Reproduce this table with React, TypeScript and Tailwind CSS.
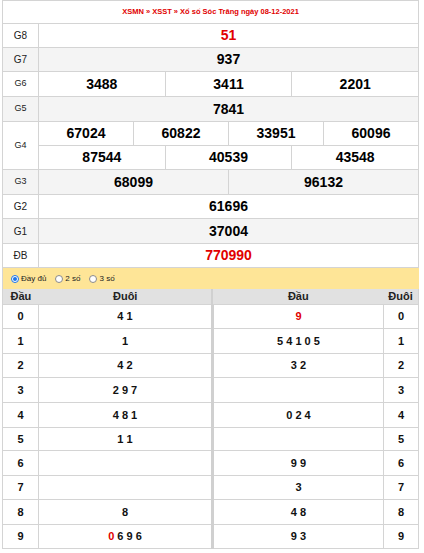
const font = { fontFamily: '"Liberation Sans", Arial, sans-serif' };

type Prize = { label: string; nums: string[][]; h: string; gray?: boolean; red?: boolean; small?: boolean };

const prizes: Prize[] = [
  { label: "G8", nums: [["51"]], h: "h-[24px]", red: true },
  { label: "G7", nums: [["937"]], h: "h-[24px]", gray: true },
  { label: "G6", nums: [["3488", "3411", "2201"]], h: "h-[25px]", small: true },
  { label: "G5", nums: [["7841"]], h: "h-[25px]", gray: true, small: true },
  {
    label: "G4",
    nums: [
      ["67024", "60822", "33951", "60096"],
      ["87544", "40539", "43548"],
    ],
    h: "h-[24px]",
    small: true,
  },
  { label: "G3", nums: [["68099", "96132"]], h: "h-[25px]", gray: true, small: true },
  { label: "G2", nums: [["61696"]], h: "h-[24px]" },
  { label: "G1", nums: [["37004"]], h: "h-[25px]", gray: true },
  { label: "ĐB", nums: [["770990"]], h: "h-[24px]", red: true },
];

const loto = [
  { d: "0", l: "4 1", r: "9", rRed: true, h: "h-[24px]" },
  { d: "1", l: "1", r: "5 4 1 0 5", h: "h-[25px]" },
  { d: "2", l: "4 2", r: "3 2", h: "h-[24px]" },
  { d: "3", l: "2 9 7", r: "", h: "h-[25px]" },
  { d: "4", l: "4 8 1", r: "0 2 4", h: "h-[25px]" },
  { d: "5", l: "1 1", r: "", h: "h-[23px]" },
  { d: "6", l: "", r: "9 9", h: "h-[25px]" },
  { d: "7", l: "", r: "3", h: "h-[24px]" },
  { d: "8", l: "8", r: "4 8", h: "h-[25px]" },
  { d: "9", l: "0 6 9 6", lRed: true, r: "9 3", h: "h-[24px]" },
];

function Radio({ on, text }: { on?: boolean; text: string }) {
  return (
    <label className="flex items-center gap-[2px] mr-[9px]">
      <span
        className={
          on
            ? "w-[8px] h-[8px] rounded-full border border-[#1a73e8] flex items-center justify-center bg-white"
            : "w-[8px] h-[8px] rounded-full border border-[#8a8a8a] bg-white"
        }
      >
        {on && <span className="w-[4px] h-[4px] rounded-full bg-[#1a73e8]" />}
      </span>
      <span className="text-[8px] text-[#222]">{text}</span>
    </label>
  );
}

export default function App() {
  return (
    <div className="bg-white w-[424px] h-[553px]" style={font}>
      <div className="ml-[2px] w-[417px] border-l border-t border-[#d4d4d4]">
        <div className="h-[23px] border-r border-b border-[#d4d4d4] flex items-center justify-center text-[7.5px] font-bold text-[#e10000]">
          XSMN » XSST » Xổ số Sóc Trăng ngày 08-12-2021
        </div>
        {prizes.map((p) => (
          <div key={p.label} className={"flex " + (p.gray ? "bg-[#f4f4f4]" : "bg-white")}>
            <div
              className={
                "w-[36px] shrink-0 border-r border-b border-[#d4d4d4] flex items-center justify-center text-[#222] " +
                (p.small ? "text-[9px]" : "text-[10px]")
              }
            >
              {p.label}
            </div>
            <div className="flex-1 flex flex-col">
              {p.nums.map((row, i) => (
                <div key={i} className="flex">
                  {row.map((n, j) => (
                    <div
                      key={j}
                      className={
                        p.h +
                        " flex-1 border-r border-b border-[#d4d4d4] flex items-center justify-center font-bold text-[14px] " +
                        (p.red ? "text-[#e10000]" : "text-black")
                      }
                    >
                      {n}
                    </div>
                  ))}
                </div>
              ))}
            </div>
          </div>
        ))}
        <div className="h-[21px] bg-[#fee597] border-r border-[#fee597] flex items-center pl-[8px]">
          <Radio on text="Đầy đủ" />
          <Radio text="2 số" />
          <Radio text="3 số" />
        </div>
        <div className="flex h-[16px] bg-[#e1e1e1] text-[11px] font-bold text-[#222]">
          <div className="w-[36px] border-b border-[#d4d4d4] flex items-center justify-center">Đầu</div>
          <div className="w-[173px] border-b border-[#d4d4d4] flex items-center justify-center">Đuôi</div>
          <div className="w-[2px] bg-[#d0d0d0]" />
          <div className="w-[170px] border-b border-[#d4d4d4] flex items-center justify-center">Đầu</div>
          <div className="w-[36px] border-r border-b border-[#d4d4d4] flex items-center justify-center">Đuôi</div>
        </div>
        {loto.map((r) => (
          <div key={r.d} className={"flex text-[11px] font-bold text-[#111] " + r.h}>
            <div className="w-[36px] border-r border-b border-[#d4d4d4] flex items-center justify-center">{r.d}</div>
            <div className="w-[172px] border-b border-[#d4d4d4] flex items-center justify-center">
              {r.lRed ? (
                <>
                  <span className="text-[#e10000]">0</span>
                  <span>&nbsp;6 9 6</span>
                </>
              ) : (
                r.l
              )}
            </div>
            <div className="w-[3px] bg-[#d0d0d0]" />
            <div
              className={
                "w-[170px] border-r border-b border-[#d4d4d4] flex items-center justify-center " +
                (r.rRed ? "text-[#e10000]" : "")
              }
            >
              {r.r}
            </div>
            <div className="w-[35px] border-r border-b border-[#d4d4d4] flex items-center justify-center">{r.d}</div>
          </div>
        ))}
      </div>
    </div>
  );
}
